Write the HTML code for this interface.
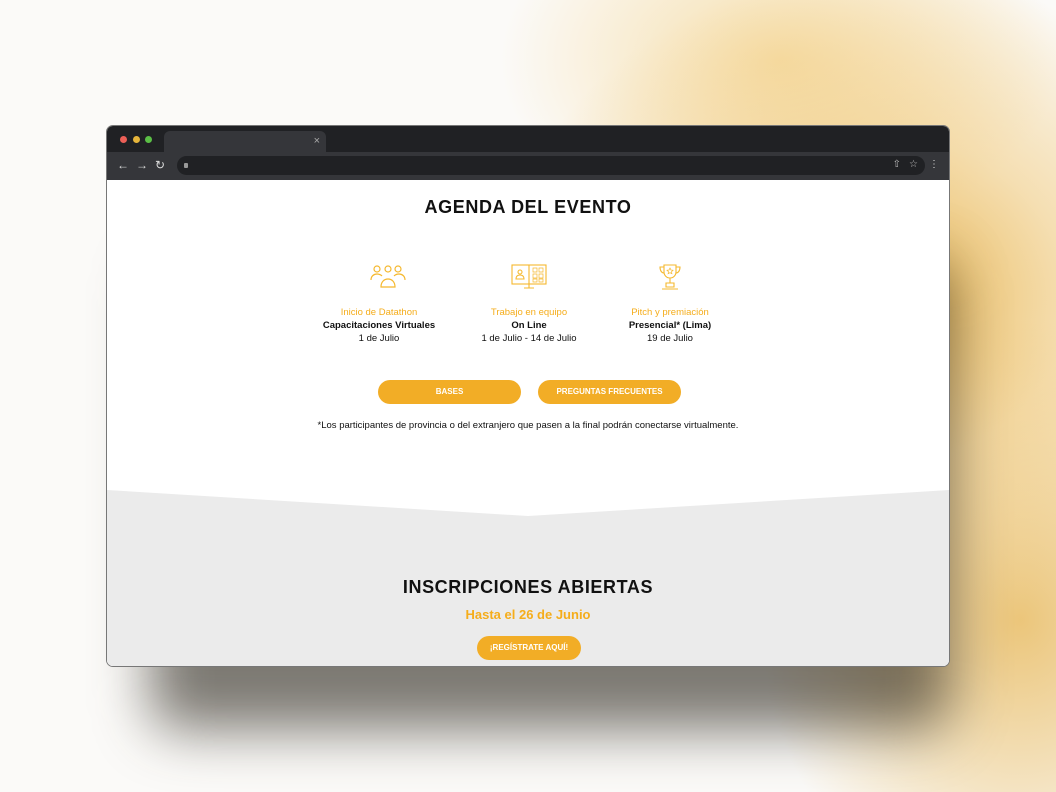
<!DOCTYPE html>
<html><head><meta charset="utf-8"><style>
*{margin:0;padding:0;box-sizing:border-box}
body{width:1056px;height:792px;overflow:hidden;position:relative;font-family:"Liberation Sans",sans-serif;
background:radial-gradient(ellipse 380px 330px at 880px 300px,rgba(232,178,70,.95),rgba(240,200,120,.55) 50%,rgba(255,255,255,0) 100%),
radial-gradient(ellipse 280px 180px at 780px 60px,rgba(245,215,150,.8),rgba(255,255,255,0) 100%),
radial-gradient(ellipse 260px 300px at 1020px 620px,rgba(230,180,80,.75),rgba(255,255,255,0) 100%),#fbfaf8;}
.shadow{position:absolute;left:150px;top:260px;width:800px;height:470px;background:rgba(40,35,25,.6);filter:blur(28px);border-radius:30px}
.win{position:absolute;left:106px;top:125px;width:844px;height:542px;border-radius:7px;overflow:hidden;background:#fff;border:1px solid #777}
.tabs{height:26px;background:#202124;position:relative}
.dot{position:absolute;top:10px;width:7px;height:7px;border-radius:50%}
.tab{position:absolute;left:57px;top:5px;width:162px;height:21px;background:#35363a;border-radius:6px 6px 0 0;color:#aaa;font-size:11px}
.bar{height:28px;background:#35363a;position:relative;color:#ddd;font-size:12px}
.url{position:absolute;left:70px;top:4px;width:748px;height:19px;background:#202124;border-radius:10px}
.page{position:absolute;top:54px;left:0;right:0;bottom:0;background:#fff}
h2{font-size:18px;font-weight:bold;text-align:center;color:#111;letter-spacing:.6px}
.col{position:absolute;width:150px;text-align:center;font-size:9.5px;line-height:13px;color:#111}
.col .o{color:#f5ad1b}
.col b{font-weight:bold}
.btn{position:absolute;height:24px;background:#f2ad26;border-radius:12px;color:#fff;font-size:8px;font-weight:bold;text-align:center;line-height:24px}
.grey{position:absolute;left:0;right:0;top:310px;bottom:0;background:#ebebeb;clip-path:polygon(0 0,50% 26px,100% 0,100% 100%,0 100%)}
</style></head><body>
<div class="shadow"></div>
<div class="win">
 <div class="tabs">
  <div class="dot" style="left:13px;background:#ec5f57"></div>
  <div class="dot" style="left:26px;background:#e6b53b"></div>
  <div class="dot" style="left:38px;background:#5bbf46"></div>
  <div class="tab"><span style="position:absolute;right:6px;top:4px">×</span></div>
 </div>
 <div class="bar">
  <span style="position:absolute;left:10px;top:6px">←</span>
  <span style="position:absolute;left:29px;top:6px">→</span>
  <span style="position:absolute;left:48px;top:6px">↻</span>
  <div class="url"><span style="position:absolute;left:7px;top:7px;width:4px;height:5px;background:#999;border-radius:1px"></span>
  <span style="position:absolute;right:24px;top:3px;font-size:10px;color:#bbb">⇧</span><span style="position:absolute;right:7px;top:3px;font-size:10px;color:#bbb">☆</span></div>
  <span style="position:absolute;right:10px;top:7px;font-size:10px">⋮</span>
 </div>
 <div class="page">
  <h2 style="position:absolute;top:17px;left:0;right:0">AGENDA DEL EVENTO</h2>
  <svg style="position:absolute;left:263px;top:84px" width="36" height="26" viewBox="0 0 36 26" fill="none" stroke="#f5b82e" stroke-width="1.2">
   <circle cx="7" cy="5" r="3"/><circle cx="18" cy="5" r="3"/><circle cx="28" cy="5" r="3"/>
   <path d="M1 16c0-4 3-6 6-6s4 1 5 2M35 16c0-4-3-6-6-6s-4 1-5 2M11 23c0-5 3-8 7-8s7 3 7 8z"/></svg>
  <svg style="position:absolute;left:404px;top:84px" width="36" height="26" viewBox="0 0 36 26" fill="none" stroke="#f5b82e" stroke-width="1.1">
   <rect x="1" y="1" width="34" height="19"/><path d="M18 1v19M13 24h10M18 20v4"/>
   <circle cx="9" cy="8" r="2"/><path d="M5 15c0-3 2-4 4-4s4 1 4 4z"/>
   <path d="M22 4h4v4h-4zM28 4h4v4h-4zM22 10h4v4h-4zM28 10h4v4h-4zM22 15h4v3h-4zM28 15h4v3h-4z" stroke-width=".7"/></svg>
  <svg style="position:absolute;left:552px;top:83px" width="22" height="28" viewBox="0 0 22 28" fill="none" stroke="#f5b82e" stroke-width="1.1">
   <path d="M5 2h12v7a6 6 0 0 1-12 0zM5 4H1c0 4 2 6 4 6M17 4h4c0 4-2 6-4 6M11 15v5M7 20h8v4H7zM3 26h16"/>
   <path d="M11 5l1 2 2 .3-1.5 1.4.4 2-1.9-1-1.9 1 .4-2L8 7.3 10 7z" stroke-width=".7"/></svg>
  <div class="col" style="left:197px;top:126px"><div class="o">Inicio de Datathon</div><b>Capacitaciones Virtuales</b><div>1 de Julio</div></div>
  <div class="col" style="left:347px;top:126px"><div class="o">Trabajo en equipo</div><b>On Line</b><div>1 de Julio - 14 de Julio</div></div>
  <div class="col" style="left:488px;top:126px"><div class="o">Pitch y premiación</div><b>Presencial* (Lima)</b><div>19 de Julio</div></div>
  <div class="btn" style="left:271px;top:200px;width:143px">BASES</div>
  <div class="btn" style="left:431px;top:200px;width:143px">PREGUNTAS FRECUENTES</div>
  <div style="position:absolute;top:240px;left:0;right:0;text-align:center;font-size:9.5px;color:#111">*Los participantes de provincia o del extranjero que pasen a la final podrán conectarse virtualmente.</div>
  <div class="grey">
   <h2 style="position:absolute;top:87px;left:0;right:0">INSCRIPCIONES ABIERTAS</h2>
   <div style="position:absolute;top:117px;left:0;right:0;text-align:center;color:#f5ad1b;font-weight:bold;font-size:13px">Hasta el 26 de Junio</div>
   <div class="btn" style="left:370px;top:146px;width:104px;height:24px">¡REGÍSTRATE AQUÍ!</div>
  </div>
 </div>
</div>
</body></html>
